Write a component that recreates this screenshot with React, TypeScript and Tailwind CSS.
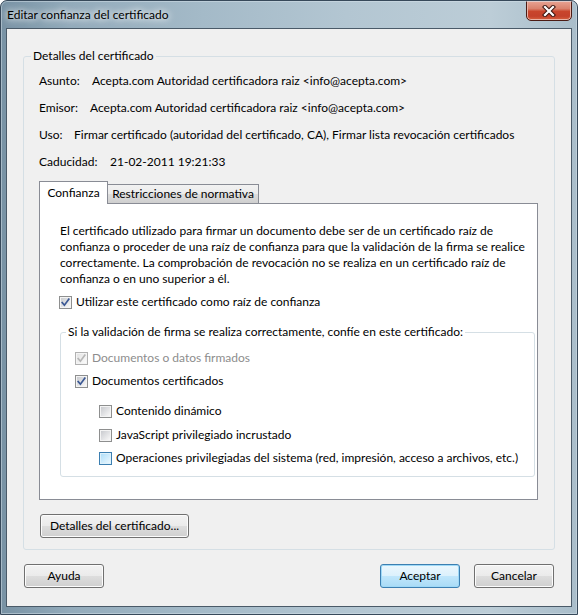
import React from "react";

type CbState = "on" | "off" | "disabledOn" | "hoverOff";

function Checkbox({ state }: { state: CbState }) {
  const disabled = state === "disabledOn";
  const hover = state === "hoverOff";
  const checked = state === "on" || state === "disabledOn";
  const border = disabled ? "#b1b1b1" : hover ? "#3c7fb1" : "#8e8f8f";
  const id = `g-${state}`;
  return (
    <svg width="13" height="13" viewBox="0 0 13 13" className="shrink-0 block">
      <defs>
        <linearGradient id={id} x1="0" y1="0" x2="1" y2="1">
          {hover ? (
            <>
              <stop offset="0" stopColor="#b1dff9" />
              <stop offset="1" stopColor="#e9f7fe" />
            </>
          ) : disabled ? (
            <>
              <stop offset="0" stopColor="#e3e3e3" />
              <stop offset="1" stopColor="#fbfbfb" />
            </>
          ) : (
            <>
              <stop offset="0" stopColor="#c9cbcf" />
              <stop offset="1" stopColor="#f8f8f8" />
            </>
          )}
        </linearGradient>
      </defs>
      <rect x="0.5" y="0.5" width="12" height="12" fill={hover ? "#def2fc" : "#f4f4f4"} stroke={border} />
      <rect x="2" y="2" width="9" height="9" fill={`url(#${id})`} />
      {checked && (
        <path
          d="M3.2 6.6 L5.4 9.2 L9.8 3.2"
          fill="none"
          stroke={disabled ? "#b6b6b6" : "#3b5894"}
          strokeWidth="1.7"
          strokeLinecap="square"
        />
      )}
    </svg>
  );
}

function Btn({ children, w, primary }: { children: React.ReactNode; w: string; primary?: boolean }) {
  return (
    <div
      className={`${w} h-[24px] rounded-[3px] border flex items-center justify-center text-black ${
        primary
          ? "border-[#3c7fb1] bg-[linear-gradient(180deg,#ecf7fd_0%,#dcf1fc_48%,#bfe6fb_52%,#a9dbf6_100%)] shadow-[inset_0_0_0_1px_#9fd9f7]"
          : "border-[#707070] bg-[linear-gradient(180deg,#f3f3f3_0%,#ebebeb_48%,#dddddd_52%,#cfcfcf_100%)] shadow-[inset_0_0_0_1px_#fcfcfc]"
      }`}
    >
      {children}
    </div>
  );
}

function DetailRow({ label, lw, value }: { label: string; lw: string; value: string }) {
  return (
    <div className="flex h-[16px] items-center whitespace-nowrap">
      <span className={`${lw} shrink-0`}>{label}</span>
      <span>{value}</span>
    </div>
  );
}

function CbRow({ state, text, pl, gray }: { state: CbState; text: string; pl: string; gray?: boolean }) {
  return (
    <div className={`flex h-[16px] items-center gap-[4px] ${pl} whitespace-nowrap`}>
      <Checkbox state={state} />
      <span className={gray ? "text-[#8d8d8d]" : ""}>{text}</span>
    </div>
  );
}

export default function App() {
  return (
    <div
      className="relative w-[578px] h-[615px] overflow-hidden rounded-t-[7px] border border-[#37495a] bg-[linear-gradient(90deg,#7892a4_0%,#93abbb_12%,#a4bac8_35%,#b3c6d2_60%,#bccdd7_85%,#a9bdca_100%)] text-[12px] leading-[16px] text-black"
      style={{ fontFamily: "Lato, 'Noto Sans', sans-serif" }}
    >
      <div className="absolute inset-0 rounded-t-[6px] border border-[#d6e2ea]/50 pointer-events-none" />
      {/* title bar */}
      <div className="flex h-[27px] items-start justify-between">
        <div className="pl-[6px] pt-[6px] [text-shadow:0_0_6px_#ffffff,0_0_10px_#ffffff] whitespace-nowrap">
          Editar confianza del certificado
        </div>
        <div className="mr-[5px] -mt-px w-[46px] h-[21px] rounded-b-[5px] border border-[#4b1b14] bg-[linear-gradient(180deg,#e8a494_0%,#d9826d_40%,#c9452c_55%,#c4412b_80%,#d7623f_100%)] shadow-[inset_0_0_0_1px_#eab3a6] flex items-center justify-center">
          <svg width="14" height="12" viewBox="0 0 14 12">
            <path d="M3 2 L11 10 M11 2 L3 10" stroke="#3a1510" strokeWidth="4.2" strokeLinecap="square" />
            <path d="M3 2 L11 10 M11 2 L3 10" stroke="#ffffff" strokeWidth="2.2" strokeLinecap="square" />
          </svg>
        </div>
      </div>

      {/* client area */}
      <div className="ml-[5px] w-[566px] h-[579px] border border-[#4a5a68] bg-[#f0f0f0] flex flex-col px-[16px]">
        <fieldset className="mt-[19px] w-[532px] border border-[#d5dfe5] rounded-[3px]">
          <legend className="ml-[7px] px-[2px] leading-[16px]">Detalles del certificado</legend>
          <div className="flex flex-col pl-[15px]">
            <div className="mt-[9px] flex flex-col gap-[11px]">
              <DetailRow label="Asunto:" lw="w-[53px]" value="Acepta.com Autoridad certificadora raiz <info@acepta.com>" />
              <DetailRow label="Emisor:" lw="w-[51px]" value="Acepta.com Autoridad certificadora raiz <info@acepta.com>" />
              <DetailRow
                label="Uso:"
                lw="w-[35px]"
                value="Firmar certificado (autoridad del certificado, CA), Firmar lista revocación certificados"
              />
              <DetailRow label="Caducidad:" lw="w-[71px]" value="21-02-2011 19:21:33" />
            </div>

            {/* tabs */}
            <div className="mt-[11px] flex items-end h-[22px]">
              <div className="relative z-10 -mb-px w-[69px] h-[23px] bg-white border border-b-0 border-[#898c95] flex items-center justify-center">
                Confianza
              </div>
              <div className="w-[151px] h-[19px] border-t border-r border-[#898c95] bg-[linear-gradient(180deg,#f2f2f2_0%,#ebebeb_50%,#dddddd_51%,#cfcfcf_100%)] flex items-center justify-center whitespace-nowrap">
                Restricciones de normativa
              </div>
            </div>
            <div className="w-[499px] h-[297px] border border-[#898c95] bg-white flex flex-col">
              <p className="pt-[19px] pl-[20px] whitespace-nowrap">
                El certificado utilizado para firmar un documento debe ser de un certificado raíz de
                <br />
                confianza o proceder de una raíz de confianza para que la validación de la firma se realice
                <br />
                correctamente. La comprobación de revocación no se realiza en un certificado raíz de
                <br />
                confianza o en uno superior a él.
              </p>
              <div className="mt-[7px]">
                <CbRow state="on" text="Utilizar este certificado como raíz de confianza" pl="pl-[19px]" />
              </div>
              <fieldset className="mt-[14px] ml-[20px] w-[475px] border border-[#d5dfe5] rounded-[3px]">
                <legend className="ml-[5px] px-[2px] leading-[16px]">
                  Si la validación de firma se realiza correctamente, confíe en este certificado:
                </legend>
                <div className="flex flex-col pb-[10px]">
                  <div className="mt-[10px]">
                    <CbRow state="disabledOn" text="Documentos o datos firmados" pl="pl-[14px]" gray />
                  </div>
                  <div className="mt-[7px]">
                    <CbRow state="on" text="Documentos certificados" pl="pl-[14px]" />
                  </div>
                  <div className="mt-[14px]">
                    <CbRow state="off" text="Contenido dinámico" pl="pl-[38px]" />
                  </div>
                  <div className="mt-[8px]">
                    <CbRow state="off" text="JavaScript privilegiado incrustado" pl="pl-[38px]" />
                  </div>
                  <div className="mt-[7px]">
                    <CbRow
                      state="hoverOff"
                      text="Operaciones privilegiadas del sistema (red, impresión, acceso a archivos, etc.)"
                      pl="pl-[38px]"
                    />
                  </div>
                </div>
              </fieldset>
            </div>
            <div className="mt-[14px] pl-px pb-[11px]">
              <Btn w="w-[149px]">Detalles del certificado...</Btn>
            </div>
          </div>
        </fieldset>

        <div className="mt-[14px] flex items-center">
          <div className="ml-px">
            <Btn w="w-[80px]">Ayuda</Btn>
          </div>
          <div className="ml-auto flex gap-[14px] mr-[1px]">
            <Btn w="w-[80px]" primary>
              Aceptar
            </Btn>
            <Btn w="w-[80px]">Cancelar</Btn>
          </div>
        </div>
      </div>
    </div>
  );
}
